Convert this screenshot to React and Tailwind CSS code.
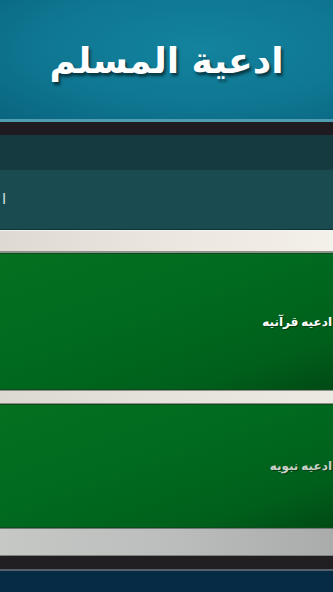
import React from 'react'

// ── Header ─────────────────────────────────────────────────────────────────────
const Header = () => (
  <header className="h-[119px] shrink-0 flex items-center justify-center bg-[radial-gradient(ellipse_at_60%_40%,#13839e_0%,#0f7792_55%,#0a6580_100%)]">
    <h1
      dir="rtl"
      className="text-white font-bold text-[36px] leading-none pt-[2px] [text-shadow:2px_3px_3px_rgba(0,0,0,0.55)]"
      style={{ fontFamily: '"DejaVu Sans", "Noto Sans", sans-serif' }}
    >
      ادعية المسلم
    </h1>
  </header>
)

// ── Green menu card ────────────────────────────────────────────────────────────
const MenuCard = ({ words, height, bright }) => (
  <div
    className={`${height} shrink-0 flex items-center justify-end border-y border-[#0b4d1a] bg-[linear-gradient(160deg,#05701f_0%,#006a1f_45%,#005f1b_80%,#004a15_100%)]`}
  >
    <div
      className={`flex gap-[3px] pr-[1px] font-bold text-[12px] ${bright ? 'text-white' : 'text-[#c8d0c8]'} [text-shadow:1px_1px_1px_rgba(0,0,0,0.4)]`}
      style={{ fontFamily: '"DejaVu Sans", sans-serif' }}
    >
      {words.map((w) => (
        <span key={w} dir="rtl">{w}</span>
      ))}
    </div>
  </div>
)

export default function App() {
  return (
    <div className="w-[333px] h-[592px] overflow-hidden flex flex-col bg-[#062b45]">
      <Header />
      <div className="h-[3px] shrink-0 bg-[#4f9db0]" />
      <div className="h-[13px] shrink-0 bg-[#1f1c21]" />

      {/* ── Title bar ── */}
      <div className="h-[35px] shrink-0 bg-[#153b41]" />
      <div className="h-[60px] shrink-0 flex items-center bg-[#1a4b51] border-b border-[#103338]">
        <span
          className="pl-[2px] text-[15px] text-[#d4e0e0]"
          style={{ fontFamily: '"DejaVu Sans", sans-serif' }}
        >
          ا
        </span>
      </div>

      {/* ── Cream divider ── */}
      <div className="h-[23px] shrink-0 border-t border-[#f2f2ee] border-b-2 border-b-[#8f918c] bg-[linear-gradient(90deg,#dedad2_0%,#ebe6de_50%,#f4f0ea_100%)]" />

      <MenuCard words={['قرآنيه', 'ادعيه']} height="h-[137px]" bright />

      <div className="h-[14px] shrink-0 border-y border-[#8c8f88] bg-[linear-gradient(90deg,#dcd9d2_0%,#e6e3dc_50%,#ece9e2_100%)]" />

      <MenuCard words={['نبويه', 'ادعيه']} height="h-[124px]" />

      {/* ── Footer ── */}
      <div className="h-[28px] shrink-0 border-t border-[#6f7a72] border-b border-b-[#80827f] bg-[linear-gradient(90deg,#c6c8c6_0%,#bcbebd_50%,#aaacac_100%)]" />
      <div className="h-[13px] shrink-0 bg-[#221f22]" />
      <div className="h-[2px] shrink-0 bg-[#55606a]" />
      <div className="flex-1 bg-[#062b45]" />
    </div>
  )
}
